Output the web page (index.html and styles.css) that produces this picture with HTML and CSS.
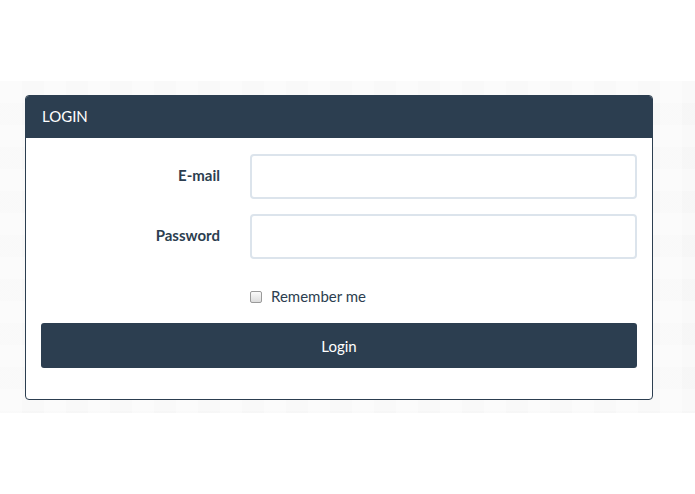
FILE: index.html
```html
<!DOCTYPE html>
<html>
<head>
<meta charset="utf-8">
<link rel="stylesheet" href="styles.css">
</head>
<body>
<div class="band">
  <div class="panel">
    <div class="panel-heading">LOGIN</div>
    <form class="panel-body">
      <div class="row">
        <label class="label">E-mail</label>
        <input class="input" type="email">
      </div>
      <div class="row">
        <label class="label">Password</label>
        <input class="input" type="password">
      </div>
      <div class="row check-row">
        <span class="label"></span>
        <label class="check"><span class="box"></span>Remember me</label>
      </div>
      <button class="btn" type="button">Login</button>
    </form>
  </div>
</div>
</body>
</html>
```
FILE: styles.css
```css
* { box-sizing: border-box; }
html, body { margin: 0; padding: 0; background: #fff; }
body {
  font-family: Lato, "Open Sans", sans-serif;
  font-size: 15px;
  color: #2c3e50;
  padding-top: 81px;
}
.band {
  background-color: #f9f9f9;
  background-image:
    linear-gradient(90deg, rgba(255,255,255,0.35) 50%, transparent 50%),
    linear-gradient(0deg, rgba(242,242,242,0.35) 50%, transparent 50%);
  background-size: 44px 44px, 44px 44px;
  padding: 14px 0 13px 25px;
}
.panel {
  width: 628px;
  background: #fff;
  border: 1px solid #2c3e50;
  border-radius: 4px;
  overflow: hidden;
}
.panel-heading {
  background: #2c3e50;
  color: #fff;
  height: 43px;
  line-height: 43px;
  padding: 0 17px;
  font-size: 15px;
  margin: -1px -1px 0 -1px;
}
.panel-body {
  padding: 16px 15px 15px 15px;
  margin: 0;
  display: flex;
  flex-direction: column;
}
.row {
  display: flex;
  align-items: center;
  margin-bottom: 15px;
}
.label {
  width: 209px;
  flex: none;
  text-align: right;
  padding-right: 15px;
  margin-left: -15px;
  margin-right: 15px;
  font-weight: 700;
  line-height: 21px;
  padding-bottom: 2px;
}
.input {
  flex: 1;
  height: 45px;
  border: 2px solid #dce4ec;
  border-radius: 4px;
  background: #fff;
  outline: none;
}
.check-row {
  height: 33px;
  padding-top: 12px;
  line-height: 21px;
  margin-bottom: 16px;
}
.check-row .label { padding-bottom: 0; }
.check {
  display: flex;
  align-items: center;
  font-weight: 400;
}
.box {
  width: 12px;
  height: 12px;
  border: 1px solid #9a9a9a;
  border-radius: 2px;
  background: linear-gradient(#fafafa, #dcdcdc);
  margin-right: 9px;
}
.btn {
  height: 45px;
  background: #2c3e50;
  color: #fff;
  border: none;
  border-radius: 3px;
  font-family: Lato, sans-serif;
  font-size: 15px;
  margin-bottom: 16px;
}
```
